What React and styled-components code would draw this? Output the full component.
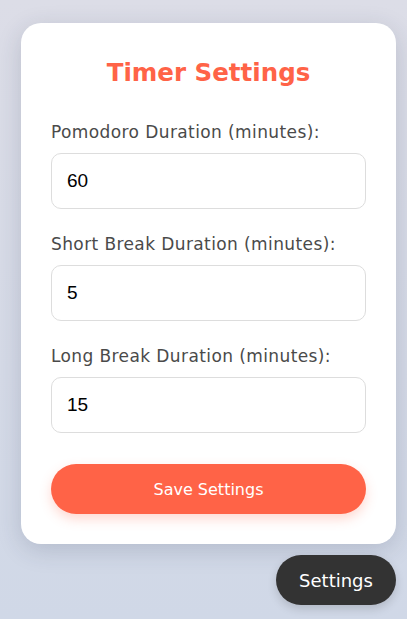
import styled, { createGlobalStyle } from "styled-components";

const GlobalStyle = createGlobalStyle`
  html, body {
    margin: 0;
    padding: 0;
    height: 100%;
  }
  body {
    font-family: "DejaVu Sans", "Inter", sans-serif;
    background: linear-gradient(180deg, #dcdde7 0%, #d5dae7 60%, #d0d8e7 100%);
    min-height: 619px;
  }
`;

const Page = styled.div`
  min-height: 619px;
  box-sizing: border-box;
  padding: 23px 11px 14px 21px;
  display: flex;
  flex-direction: column;
  align-items: flex-end;
`;

const Card = styled.div`
  width: 375px;
  box-sizing: border-box;
  background: #fff;
  border-radius: 20px;
  padding: 30px;
  box-shadow: 0 6px 24px rgba(40, 50, 80, 0.18);
`;

const Title = styled.h2`
  margin: 0 0 27px;
  text-align: center;
  color: #ff6347;
  font-size: 24.5px;
  line-height: 40px;
  font-weight: 700;
`;

const Field = styled.div`
  margin-bottom: ${(p) => (p.$last ? "0" : "23px")};
`;

const Label = styled.label`
  display: block;
  font-size: 17px;
  letter-spacing: 0.4px;
  line-height: 24px;
  color: #4a4a4a;
  margin-bottom: 9px;
`;

const Input = styled.input`
  display: block;
  width: 100%;
  height: 56px;
  box-sizing: border-box;
  padding: 0 15px;
  border: 1px solid #ddd;
  border-radius: 10px;
  font-family: "Liberation Sans", Arial, sans-serif;
  font-size: 19px;
  color: #000;
  outline: none;
`;

const SaveButton = styled.button`
  display: block;
  width: 100%;
  height: 50px;
  margin-top: 31px;
  border: none;
  border-radius: 25px;
  background: #ff6347;
  color: #fff;
  font-family: inherit;
  font-size: 16px;
  font-weight: 500;
  box-shadow: 0 5px 12px rgba(255, 99, 71, 0.25);
  cursor: pointer;
`;

const ToggleButton = styled.button`
  margin-top: 11px;
  width: 120px;
  height: 50px;
  border: none;
  border-radius: 25px;
  background: #333;
  color: #fff;
  font-family: inherit;
  font-size: 18px;
  font-weight: 500;
  box-shadow: 0 4px 10px rgba(0, 0, 0, 0.15);
  cursor: pointer;
`;

const fields = [
  { id: "pomodoro", label: "Pomodoro Duration (minutes):", value: 60 },
  { id: "short", label: "Short Break Duration (minutes):", value: 5 },
  { id: "long", label: "Long Break Duration (minutes):", value: 15 },
];

export default function App() {
  return (
    <>
      <GlobalStyle />
      <Page>
        <Card>
          <Title>Timer Settings</Title>
          {fields.map((f, i) => (
            <Field key={f.id} $last={i === fields.length - 1}>
              <Label htmlFor={f.id}>{f.label}</Label>
              <Input id={f.id} type="number" defaultValue={f.value} />
            </Field>
          ))}
          <SaveButton>Save Settings</SaveButton>
        </Card>
        <ToggleButton>Settings</ToggleButton>
      </Page>
    </>
  );
}
